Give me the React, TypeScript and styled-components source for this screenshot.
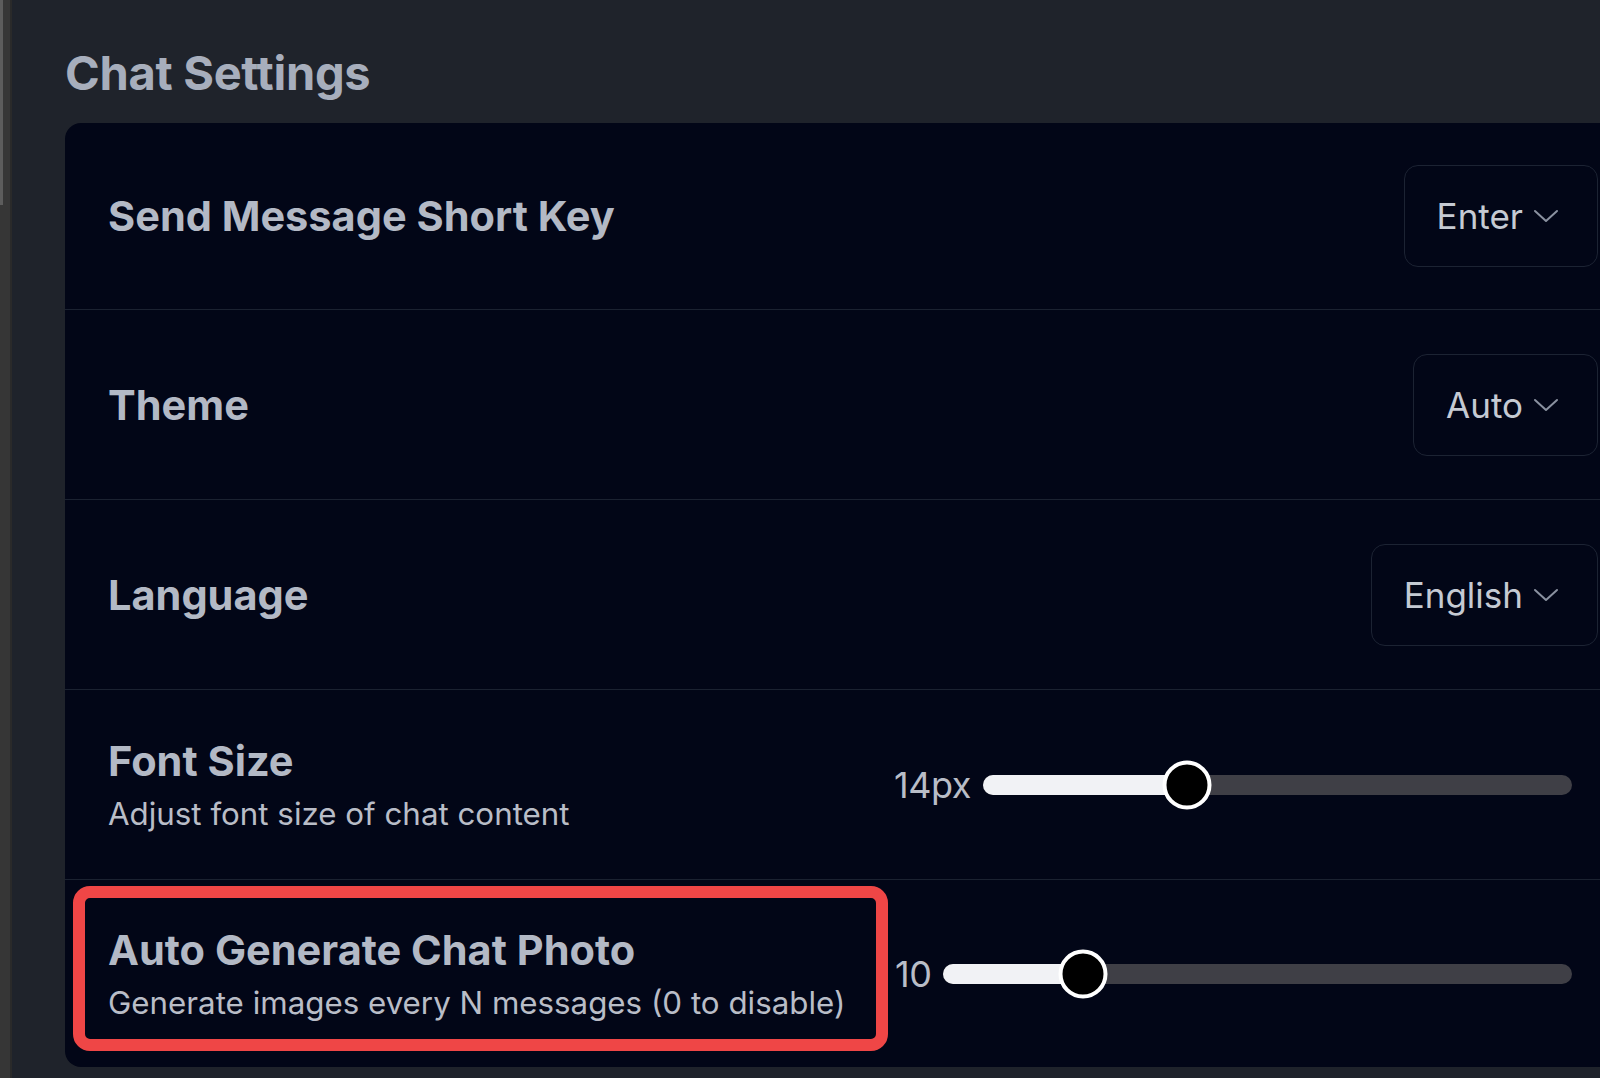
import React from 'react';
import styled, { createGlobalStyle } from 'styled-components';

const GlobalStyle = createGlobalStyle`
  html, body {
    margin: 0;
    padding: 0;
    background: #1f232b;
    overflow: hidden;
  }
  body {
    font-family: Inter, "Noto Sans", "Liberation Sans", sans-serif;
    -webkit-font-smoothing: antialiased;
  }
`;

const Shell = styled.div`
  display: flex;
  width: 1600px;
  height: 1078px;
  overflow: hidden;
`;

const SideStrip = styled.div`
  position: relative;
  flex: 0 0 10px;
  background: #363636;
  border-right: 2px solid #2a2a2a;

  &::before {
    content: '';
    position: absolute;
    left: 0;
    top: 0;
    width: 3px;
    height: 205px;
    background: #5c5c5c;
  }
`;

const Main = styled.main`
  flex: 0 0 auto;
  width: 1576px;
  padding: 45px 0 0 53px;
`;

const PageTitle = styled.h1`
  margin: 0 0 22px 0;
  font-size: 47px;
  line-height: 56px;
  font-weight: 700;
  color: #a7aebc;
  letter-spacing: -0.3px;
`;

const Card = styled.section`
  background: #020617;
  border-radius: 16px;
  overflow: hidden;
`;

const Row = styled.div`
  position: relative;
  display: flex;
  align-items: center;
  justify-content: space-between;
  height: 190px;
  padding: 0 43px;
  box-sizing: border-box;
  border-bottom: 1.5px solid #1b2231;

  &:first-child {
    height: 187px;
  }

  &:last-child {
    height: 187px;
    border-bottom: none;
  }
`;

const LabelBlock = styled.div`
  display: flex;
  flex-direction: column;
  gap: 9px;
`;

const Label = styled.div`
  font-size: 41.5px;
  line-height: 50px;
  font-weight: 700;
  color: #b3b9c5;
`;

const Description = styled.div`
  font-size: 31.3px;
  line-height: 38px;
  font-weight: 400;
  color: #b9bdc7;
`;

const SelectBox = styled.button`
  display: flex;
  align-items: center;
  gap: 10px;
  height: 102px;
  padding: 0 38px 0 32px;
  box-sizing: border-box;
  background: transparent;
  border: 1.5px solid #1c2333;
  border-radius: 14px;
  font-family: inherit;
  font-size: 35px;
  color: #c5cad3;
  cursor: pointer;
`;

const SliderGroup = styled.div<{ $width: number }>`
  display: flex;
  align-items: center;
  gap: 12px;
  width: ${p => p.$width}px;
  margin-right: 26px;
`;

const SliderValue = styled.span`
  font-size: 36px;
  line-height: 42px;
  color: #b9bdc7;
  letter-spacing: -0.5px;
`;

const Track = styled.div`
  position: relative;
  flex: 1;
  height: 20px;
  border-radius: 10px;
  background: #3f3f46;
`;

const Fill = styled.div`
  position: absolute;
  left: 0;
  top: 0;
  bottom: 0;
  border-radius: 10px;
  background: #f1f2f5;
`;

const Thumb = styled.div`
  position: absolute;
  top: 50%;
  width: 49px;
  height: 49px;
  box-sizing: border-box;
  border-radius: 50%;
  background: #000;
  border: 4px solid #fff;
  transform: translate(-50%, -50%);
`;

const Highlight = styled.div`
  position: absolute;
  left: 8px;
  top: 6px;
  width: 815px;
  height: 165px;
  box-sizing: border-box;
  border: 12px solid #ef4646;
  border-radius: 17px;
  pointer-events: none;
`;

const Chevron = () => (
  <svg width="26" height="14" viewBox="0 0 26 14" fill="none">
    <polyline points="2,2 13,12 24,2" stroke="#8a91a0" strokeWidth="2" strokeLinecap="round" strokeLinejoin="round" />
  </svg>
);

const Select: React.FC<{ value: string }> = ({ value }) => (
  <SelectBox>
    <span>{value}</span>
    <Chevron />
  </SelectBox>
);

const Slider: React.FC<{ label: string; value: number; min: number; max: number; width: number }> = ({
  label, value, min, max, width,
}) => {
  const frac = (value - min) / (max - min);
  // thumb centre travels between radius and track end minus radius
  const pos = `calc(24px + (100% - 48px) * ${frac})`;
  return (
    <SliderGroup $width={width}>
      <SliderValue>{label}</SliderValue>
      <Track>
        <Fill style={{ width: pos }} />
        <Thumb style={{ left: pos }} />
      </Track>
    </SliderGroup>
  );
};

const App: React.FC = () => (
  <>
    <GlobalStyle />
    <Shell>
      <SideStrip />
      <Main>
        <PageTitle>Chat Settings</PageTitle>
        <Card>
          <Row>
            <Label>Send Message Short Key</Label>
            <Select value="Enter" />
          </Row>
          <Row>
            <Label>Theme</Label>
            <Select value="Auto" />
          </Row>
          <Row>
            <Label>Language</Label>
            <Select value="English" />
          </Row>
          <Row>
            <LabelBlock>
              <Label>Font Size</Label>
              <Description>Adjust font size of chat content</Description>
            </LabelBlock>
            <Slider label="14px" value={14} min={12} max={18} width={678} />
          </Row>
          <Row>
            <Highlight />
            <LabelBlock>
              <Label>Auto Generate Chat Photo</Label>
              <Description>Generate images every N messages (0 to disable)</Description>
            </LabelBlock>
            <Slider label="10" value={10} min={0} max={50} width={677} />
          </Row>
        </Card>
      </Main>
    </Shell>
  </>
);

export default App;
